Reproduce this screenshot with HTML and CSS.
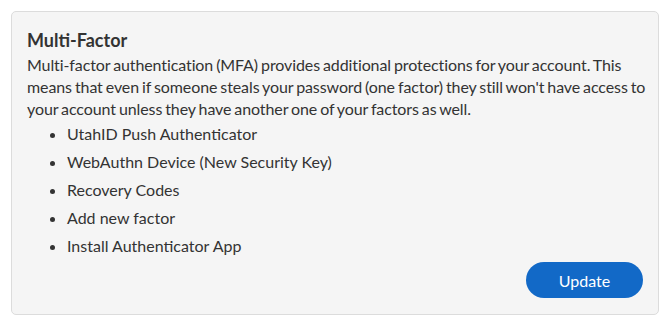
FILE: index.html
```html
<!DOCTYPE html>
<html lang="en">
<head>
  <meta charset="UTF-8">
  <meta name="viewport" content="width=device-width, initial-scale=1.0">
  <title>Multi-Factor</title>
  <link rel="stylesheet" href="styles.css">
</head>
<body>
  <div class="card">
    <h2 class="card-title">Multi-Factor</h2>
    <p class="card-text">Multi-factor authentication (MFA) provides additional protections for your account. This means that even if someone steals your password (one factor) they still won't have access to your account unless they have another one of your factors as well.</p>
    <ul class="factors">
      <li>UtahID Push Authenticator</li>
      <li>WebAuthn Device (New Security Key)</li>
      <li>Recovery Codes</li>
      <li>Add new factor</li>
      <li>Install Authenticator App</li>
    </ul>
    <div class="actions">
      <button class="btn-primary">Update</button>
    </div>
  </div>
</body>
</html>
```

FILE: styles.css
```css
body {
  margin: 0;
  padding: 11px 10px 10px 11px;
  background: #ffffff;
  font-family: Lato, "Noto Sans", Arial, sans-serif;
  color: #333333;
}
.card {
  background-color: #f5f5f5;
  border: 1px solid #dcdcdc;
  border-radius: 5px;
  padding: 17px 12px 16px 15px;
}
.card-title {
  margin: 0 0 3px 0;
  font-size: 18px;
  line-height: 22px;
  font-weight: 700;
  color: #333333;
}
.card-text {
  margin: 0;
  font-size: 16px;
  line-height: 22px;
  letter-spacing: -0.1px;
  word-spacing: -1px;
}
.factors {
  margin: 0;
  padding-left: 40px;
  font-size: 16px;
  line-height: 28px;
}
.actions {
  display: flex;
  justify-content: flex-end;
  margin-top: 2px;
  padding-right: 3px;
}
.btn-primary {
  width: 117px;
  height: 36px;
  border: none;
  border-radius: 18px;
  background-color: #1269c7;
  color: #ffffff;
  font-family: inherit;
  font-size: 16px;
  cursor: pointer;
}
```
